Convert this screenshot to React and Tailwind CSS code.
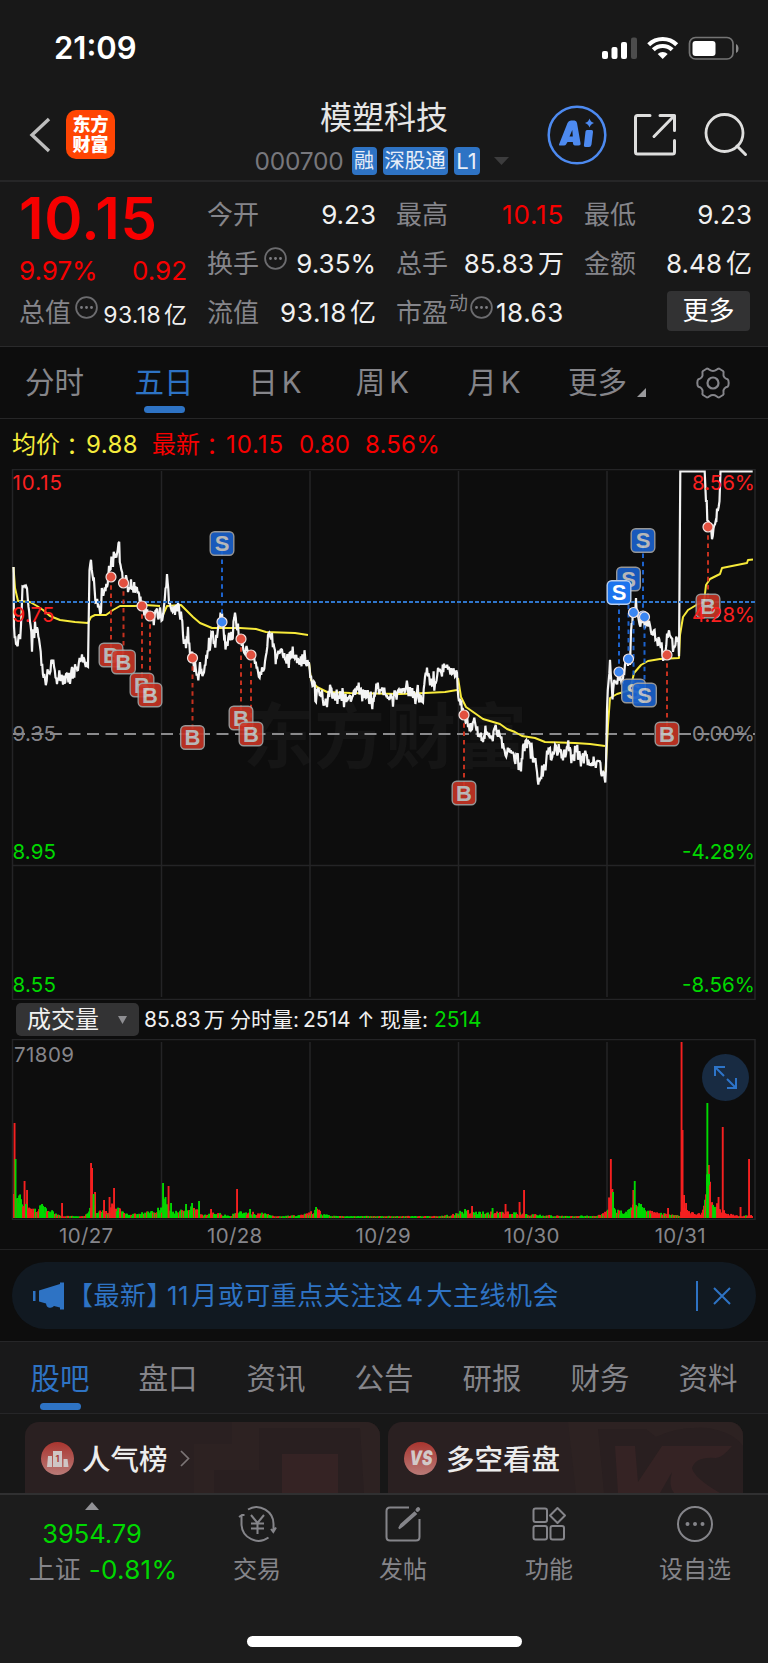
import { useMemo } from "react";

const RED = "#fa2020";
const GREEN = "#00d800";
const GRAY = "#85858a";

// price line, [x, y]
const pricePoints = [
  [13.5, 567], [14, 625], [16, 648], [18.5, 632], [21, 635], [22.5, 590], [25, 582], [27, 584], [28.5, 608], [32, 642], [35, 625], [37, 632], [39, 640], [41.5, 662],
  [45, 683], [47.5, 672], [49, 674], [52, 657], [54, 667], [57, 680], [60, 674], [63, 682], [66, 677], [70, 681], [72, 672], [75, 668], [78, 664], [82, 658], [85, 662],
  [88, 664], [89.5, 572], [91, 565], [93, 575], [95.5, 598], [98, 607], [101, 612], [102.5, 583], [104, 595], [107, 585], [109, 568], [113, 558], [115, 553], [117, 555],
  [118.5, 538], [120.5, 565], [123, 582], [126, 580], [128, 592], [131, 584], [133.5, 590], [137, 589], [139, 596], [142, 607], [145, 610], [148, 616], [153, 617],
  [157, 613], [160, 613], [161.5, 625], [164, 608], [167, 575], [169, 600], [172, 610], [175, 612], [178, 608], [181, 612], [183, 632], [186, 645], [188, 632], [190, 650],
  [193, 658], [195, 665], [197.5, 673], [200, 671], [204, 675], [207, 655], [209, 646], [212, 629], [214.5, 646], [217, 635], [219, 620], [222, 618], [225.5, 645],
  [229, 635], [232, 638], [235, 615], [238, 630], [241, 638], [245, 650], [251, 657], [255, 663], [258, 672], [262, 677], [265, 663], [268, 640], [270, 635], [272, 637],
  [275, 652], [277, 657], [282, 650], [285, 657], [288, 660], [292, 653], [297, 664], [303, 658], [309, 663], [311, 680], [314, 685], [316, 702], [317, 692], [322, 693],
  [325, 703], [327, 703], [330, 683], [333, 693], [336, 700], [341, 693], [344, 702], [348, 695], [350, 700], [353, 692], [358, 690], [363, 693], [367, 693], [370, 701],
  [373, 703], [375, 690], [377, 685], [380, 695], [385, 690], [390, 697], [393, 698], [398, 693], [403, 690], [410, 690], [413, 697], [417, 693], [420, 700], [423, 697],
  [425, 680], [427, 672], [430, 682], [435, 680], [438, 675], [442, 671], [444, 667], [448, 667], [452, 673], [455, 673], [457, 677], [459, 700], [462, 710], [464, 715],
  [468, 725], [472, 727], [475, 717], [478, 735], [483, 738], [487, 733], [492, 740], [495, 727], [500, 735], [503, 748], [507, 754], [510, 747], [513, 757], [517, 755],
  [521, 769], [523, 748], [527, 743], [530, 748], [533, 758], [537, 772], [539, 785], [542, 770], [545.5, 767], [547, 752], [553, 755], [558, 752], [563, 757], [569, 749],
  [572, 757], [578, 755], [583, 758], [590, 762], [595, 760], [599, 760], [602.5, 774], [606, 772], [607, 705], [608.5, 678], [610, 663], [612.5, 698], [615, 678],
  [616.5, 688], [619, 672], [622, 683], [625, 665], [628, 658], [630, 664], [631, 632], [633, 613], [636, 607], [638, 620], [642, 622], [644, 617], [647, 625], [649, 623],
  [651, 632], [653, 630], [657, 643], [660, 640], [664, 658], [667, 635], [669, 628], [673, 647], [677, 643], [679, 652], [680.3, 471.5], [704.7, 471.5], [706, 502],
  [708, 522], [712, 535], [715, 528], [717, 512], [719.5, 500], [720.5, 471.5], [752.7, 471.5],
];

const averageLines = [
  "M13.5 567 L15 588 L18 601 L30 602 L37 606 L43 610 L50 616 L60 620 L75 622 L88 623 L91 617 L95 615 L106 615 L113 610 L120 606 L135 606 L145 605 L160 606",
  "M162 617 L167 606 L181 605 L186 610 L193 617 L200 623 L212 628 L240 628 L256 629 L266 632 L295 633 L308 635",
  "M309 662 L311 680 L317 687 L327 692 L350 693 L400 694 L425 693 L445 692 L457 690",
  "M458 678 L461 697 L466 707 L476 714 L483 719 L500 724 L507 729 L515 732 L522 736 L535 738 L545 742 L575 743 L590 744 L605 746",
  "M605.5 772 L608 725 L610 698 L617 694 L630 690 L632 682 L634 673 L641 665 L648 661 L660 659 L679 658 L680 635 L683 617 L688 610 L698 604 L704 602 L706 585 L710 579 L720 574 L722 568 L737 565 L747 563 L748 560 L753 559.5",
];

// [type, x, dotY, badgeY]
const trades = [
  ["B", 111, 577, 655], ["B", 123.5, 583, 662], ["B", 142, 606, 685], ["B", 150, 616, 695],
  ["B", 192.5, 658, 737.5], ["S", 222, 622, 543.5], ["B", 241, 639, 718], ["B", 251, 655, 734],
  ["B", 464, 715, 793], ["S", 643, 616, 540.5], ["S", 628.5, 659, 579], ["S", 619, 672, 592.5],
  ["S", 633.5, 612.5, 691], ["S", 644.5, 617, 695], ["B", 667, 655, 734], ["B", 708, 527, 606],
];

// rough height of the volume bars along the axis
const volumeEnvelope = [
  [13, 22], [20, 22], [28, 14], [33, 10], [42, 12], [55, 6], [63, 2], [85, 2], [90, 18], [96, 12], [105, 6], [112, 14], [120, 9], [125, 5], [140, 5], [152, 8], [161, 10],
  [165, 18], [170, 12], [178, 5], [187, 13], [199, 7], [203, 3], [215, 6], [230, 2], [237, 7], [268, 5], [275, 1.5], [300, 3], [308, 5], [317, 9], [325, 4], [335, 2],
  [440, 2], [455, 4], [465, 9], [480, 6], [500, 6], [510, 7], [530, 4], [545, 3], [570, 2], [600, 3], [607, 8], [611, 30], [616, 12], [625, 5], [633, 13], [640, 14],
  [650, 7], [665, 5], [680, 2], [683, 24], [688, 8], [702, 5], [707, 50], [713, 18], [720, 13], [727, 5], [740, 2], [753, 4],
];

const volumePeaks = [
  [14.5, 95, "r"], [15.5, 59, "g"], [17.5, 20, "g"], [24.5, 37, "r"], [27, 28, "r"], [26, 14, "g"], [42, 14, "g"], [62, 15, "r"], [91, 55, "r"], [92, 50, "r"],
  [95, 26, "r"], [93.5, 24, "g"], [104, 18, "r"], [109.5, 21, "r"], [114, 30, "r"], [163, 35, "g"], [165.5, 21, "g"], [168.5, 32, "r"], [171, 15, "g"], [186, 14, "g"],
  [192, 15, "g"], [199, 17, "g"], [211, 9, "r"], [237, 29, "r"], [250, 9, "g"], [316, 11, "g"], [465, 9, "g"], [472, 12, "r"], [492.5, 10, "g"], [505.5, 14, "r"],
  [519.5, 16, "r"], [524, 28, "r"], [610.8, 59, "r"], [612.3, 29, "r"], [613, 26, "g"], [633.3, 28, "r"], [634.7, 37, "g"], [668, 10, "r"], [681.5, 176, "r"],
  [682.5, 88, "r"], [684, 23, "r"], [708.7, 53, "r"], [707.3, 115, "g"], [709, 44, "g"], [710, 33, "r"], [718.5, 21, "r"], [722.7, 91, "r"], [740.5, 11, "r"], [749, 59, "r"],
];

const gridX = [161.5, 310, 458.5, 607];
const dates = ["10/27", "10/28", "10/29", "10/30", "10/31"];

const noise = (n) => {
  const v = Math.sin(n * 127.1 + 3.7) * 43758.5453;
  return v - Math.floor(v);
};

function buildPricePath() {
  let d = `M${pricePoints[0][0]} ${pricePoints[0][1]}`;
  for (let i = 1; i < pricePoints.length; i++) {
    const [x0, y0] = pricePoints[i - 1];
    const [x1, y1] = pricePoints[i];
    const flat = y0 === 471.5 || y1 === 471.5;
    const steps = flat ? 1 : Math.max(1, Math.round((x1 - x0) * 1.3));
    for (let s = 1; s <= steps; s++) {
      const t = s / steps;
      const x = x0 + (x1 - x0) * t;
      const spike = noise(x * 3.1) > 0.8 ? 21 : 11;
      const jitter = flat ? 0 : (noise(x) - 0.5) * spike;
      d += ` L${x.toFixed(1)} ${(y0 + (y1 - y0) * t + jitter).toFixed(1)}`;
    }
  }
  return d;
}

function isGreen(x) {
  if (x > 680 && x < 705) return false;
  if (x >= 705 && x < 716) return noise(x * 2.3) > 0.25;
  if (x > 716) return noise(x * 2.3) > 0.93;
  return noise(x * 2.3) > 0.42;
}

function buildVolume() {
  const bars = [];
  let k = 0;
  for (let x = 14; x < 753; x++) {
    while (k < volumeEnvelope.length - 2 && volumeEnvelope[k + 1][0] < x) k++;
    const [x0, h0] = volumeEnvelope[k];
    const [x1, h1] = volumeEnvelope[k + 1];
    const h = h0 + ((h1 - h0) * (x - x0)) / (x1 - x0);
    bars.push([x, Math.max(1.5, h * (0.4 + noise(x * 0.77) * 0.7)), isGreen(x) ? "g" : "r"]);
  }
  return bars.concat(volumePeaks);
}

function Label({ x, y, w, end, fill, children }) {
  return (
    <text x={x} y={y} fontSize="20.5" fill={fill} textAnchor={end ? "end" : "start"} textLength={w} className="font-['Inter']">
      {children}
    </text>
  );
}

function PriceChart() {
  const path = useMemo(buildPricePath, []);
  return (
    <svg width="768" height="531" viewBox="0 469 768 531" className="block">
      <text x="243" y="762" fontSize="71" textLength="284" fontWeight="700" fill="#151515" className="font-['Noto_Sans_CJK_SC']">东方财富</text>
      <g stroke="#242426" strokeWidth="1.5" fill="none">
        <path d="M12.5 999.5V469.5H755V999.5Z" />
        <path d="M12.5 865.5H755" />
        {gridX.map((x) => <path key={x} d={`M${x} 471V997`} />)}
      </g>
      <path d="M13 734H755" stroke="#8a8a8c" strokeWidth="1.8" strokeDasharray="12 6.5" />
      {averageLines.map((d) => <path key={d} d={d} stroke="#f7ea3a" strokeWidth="2" fill="none" strokeLinejoin="round" />)}
      <path d={path} stroke="#f4f4f4" strokeWidth="2.2" fill="none" strokeLinejoin="miter" strokeMiterlimit="3" />
      <path d="M13 602H755" stroke="#2f76cc" strokeWidth="2" strokeDasharray="4 2" />
      {trades.map(([type, x, dotY, y]) => (
        <path key={`l${x}`} d={`M${x} ${dotY}V${y}`} stroke={type === "B" ? "#c4311f" : "#1c62cc"} strokeWidth="2" strokeDasharray="4.5 3.8" />
      ))}
      {trades.map(([type, x, dotY]) => (
        <circle key={`d${x}`} cx={x} cy={dotY} r="5" fill={type === "B" ? "#e2503f" : "#3b86f2"} stroke="#f2e4e2" strokeWidth="1.2" />
      ))}
      {trades.map(([type, x, , y]) => {
        const bright = x === 619;
        return (
          <g key={`b${x}`} opacity={bright ? 1 : 0.9}>
            <rect x={x - 11.8} y={y - 11.8} width="23.6" height="23.6" rx="4.5" fill={type === "B" ? "#c83425" : bright ? "#1b74ee" : "#1a62ce"} stroke={bright ? "#b9cdea" : "#a5a5a5"} strokeWidth="1.4" />
            <text x={x} y={y + 7.7} fontSize="22" fontWeight="700" textAnchor="middle" fill={bright ? "#fff" : "#cacaca"} className="font-['Liberation_Sans']">{type}</text>
          </g>
        );
      })}
      <Label x="12.5" y="490" w="49.5" fill={RED}>10.15</Label>
      <Label x="12.5" y="622" w="42" fill={RED}>9.75</Label>
      <Label x="12.5" y="740.5" w="43.5" fill={GRAY}>9.35</Label>
      <Label x="12.5" y="859" w="43.5" fill={GREEN}>8.95</Label>
      <Label x="12.5" y="991.5" w="43.5" fill={GREEN}>8.55</Label>
      <Label x="755" y="490" w="63" end fill={RED}>8.56%</Label>
      <Label x="755" y="622" w="63" end fill={RED}>4.28%</Label>
      <Label x="755" y="740.5" w="63" end fill={GRAY}>0.00%</Label>
      <Label x="755" y="859" w="73" end fill={GREEN}>-4.28%</Label>
      <Label x="755" y="991.5" w="73" end fill={GREEN}>-8.56%</Label>
    </svg>
  );
}

function VolumeChart() {
  const bars = useMemo(buildVolume, []);
  return (
    <svg width="768" height="181" viewBox="0 1039 768 181" className="block">
      <g stroke="#242426" strokeWidth="1.5" fill="none">
        <path d="M12.5 1219.5V1039.5H755V1219.5Z" />
        {gridX.map((x) => <path key={x} d={`M${x} 1042V1218`} />)}
      </g>
      {bars.map(([x, h, c], i) => (
        <rect key={i} x={x - 0.9} y={1218 - h} width="1.9" height={h} fill={c === "r" ? "#f52020" : GREEN} />
      ))}
      <Label x="14" y="1061.5" w="60" fill={GRAY}>71809</Label>
      <circle cx="725.5" cy="1077.5" r="23.5" fill="#182b42" />
      <path d="M715 1076V1067H725M715 1067L724 1076M727 1079L736 1088M736 1078V1088H727" stroke="#2d74c8" strokeWidth="2" fill="none" />
    </svg>
  );
}

function Dots({ className }) {
  return (
    <svg width="23" height="23" viewBox="0 0 23 23" className={className}>
      <circle cx="11.5" cy="11.5" r="10.4" fill="none" stroke="#6c6c6f" strokeWidth="1.8" />
      <path d="M6.5 11.5h.01M11.5 11.5h.01M16.5 11.5h.01" stroke="#7c7c80" strokeWidth="2.9" strokeLinecap="round" />
    </svg>
  );
}

function StatusBar() {
  return (
    <div className="flex h-[95px] items-center justify-between pl-[54px] pr-[29px]">
      <span className="mb-[1px] text-[31px] leading-none font-semibold text-white">21:09</span>
      <svg width="138" height="26" viewBox="601 34 138 26">
        <g fill="#fff">
          <rect x="602" y="50" width="6" height="8" rx="2" />
          <rect x="611.5" y="46" width="6" height="12" rx="2" />
          <rect x="621" y="41" width="6" height="17" rx="2" />
          <rect x="631" y="36.5" width="6" height="21.5" rx="2" fill="#4c4c4c" />
          <path d="M662.7 58L657.7 53A7.2 7.2 0 0 1 667.7 53Z" />
          <rect x="692.5" y="40" width="23" height="15" rx="3" />
        </g>
        <path d="M653.3 48.8A13.5 13.5 0 0 1 672.1 48.8M648.7 43.7A20 20 0 0 1 676.7 43.7" stroke="#fff" strokeWidth="4.2" fill="none" />
        <rect x="689.5" y="36.5" width="43.5" height="21.5" rx="6" fill="none" stroke="#747474" strokeWidth="1.7" />
        <path d="M736 43Q738.5 44 738.5 47.5T736 52Z" fill="#8a8a8a" />
      </svg>
    </div>
  );
}

function Header() {
  return (
    <header className="flex h-[87px] border-b-2 border-[#262627]">
      <div className="flex w-[234px] items-center pb-[2px] pl-[29px]">
        <svg width="22" height="36" viewBox="0 0 22 36" className="mb-[3px]">
          <path d="M20 2L3 18L20 34" stroke="#bdbdbd" strokeWidth="3.4" fill="none" />
        </svg>
        <div className="mb-1 ml-[15px] flex h-[49px] w-[49px] flex-col items-center justify-center rounded-[10px] bg-[#ff4503] text-[18px] leading-[20px] font-black text-white">
          <span>东方</span>
          <span>财富</span>
        </div>
      </div>
      <div className="flex w-[300px] flex-col items-center">
        <h1 className="mt-[6px] text-[32px] leading-[34px] text-[#e6e6e6]">模塑科技</h1>
        <div className="mt-[12px] flex h-[28px] items-center pr-[5px] text-[#e8eef8]">
          <span className="mr-[8px] w-[89px] text-[24.5px] leading-none tracking-[-0.2px] text-[#77777c]">000700</span>
          <span className="mr-[6px] flex h-[28px] w-[25px] items-center justify-center rounded-[4px] bg-[#2e73c4] text-[20px]">融</span>
          <span className="mr-[6px] flex h-[28px] w-[65px] items-center justify-center rounded-[4px] bg-[#2e73c4] text-[20.5px]">深股通</span>
          <span className="mr-[14px] flex h-[28px] w-[26px] items-center justify-center rounded-[4px] bg-[#2e73c4] text-[22px]">L1</span>
          <svg width="15" height="8" viewBox="0 0 15 8"><path d="M0 0H15L7.5 8Z" fill="#3c3c3d" /></svg>
        </div>
      </div>
      <div className="flex items-center pb-[5px] pl-[13px]">
        <svg width="60" height="60" viewBox="0 0 60 60">
          <circle cx="30" cy="30" r="28.3" fill="none" stroke="#4d8af0" strokeWidth="2.5" />
          <path fillRule="evenodd" d="M12 39.5L20.5 18Q21.5 15.5 24 15.5H27.5Q29.5 15.5 30 18L33.5 38Q34 40.5 31.5 40.5H28Q26 40.5 25.8 37H20.5L19 39.5Q18.5 40.5 17 40.5H13Q11.5 40.5 12 39.5ZM22.5 31.5H25.8L25.3 25Z" fill="#4d8af0" />
          <path d="M40 25H44.5Q46.3 25 46 27L44.5 39.5Q44 42 42 42H38.5Q36.5 42 37 39.5L38.5 26.5Q38.7 25 40 25ZM42.5 13.5Q43.5 17 47 18Q43.5 19 42.5 22.5Q41.5 19 38 18Q41.5 17 42.5 13.5Z" fill="#4d8af0" />
        </svg>
        <svg width="44" height="44" viewBox="0 0 44 44" className="ml-[26px]">
          <path d="M17 2.5H4.5Q2.5 2.5 2.5 4.5V39Q2.5 41 4.5 41H39.5Q41.5 41 41.5 39V27.5M27 2.5H41.5V17.5M41 3L21 23.5" stroke="#dededd" strokeWidth="3" fill="none" strokeLinecap="round" strokeLinejoin="round" />
        </svg>
        <svg width="44" height="44" viewBox="0 0 44 44" className="ml-[27px]">
          <circle cx="20.5" cy="20" r="18.5" fill="none" stroke="#dededd" strokeWidth="2.8" />
          <path d="M33 33L41.5 41.5" stroke="#dededd" strokeWidth="3" strokeLinecap="round" />
        </svg>
      </div>
    </header>
  );
}

function Cell({ label, value, dots, sup, valueClass = "text-[#f0f0f0]" }) {
  return (
    <div className="flex h-[49px] items-center justify-between text-[26px] leading-none whitespace-nowrap">
      <span className="flex items-center text-[#85858a]">
        {label}
        {sup && <span className="mb-[18px] ml-[1px] text-[19px]">{sup}</span>}
        {dots && <Dots className={sup ? "mb-[10px] ml-[2px]" : "mb-[10px] ml-[5px]"} />}
      </span>
      <span className={valueClass}>{value}</span>
    </div>
  );
}

function Quote() {
  return (
    <section className="grid h-[165px] grid-cols-[168px_169px_168px_168px] gap-x-5 border-b border-[#2a2a2b] pt-[8px] pl-[19px]">
      <div>
        <div className="flex h-[56px] items-center text-[58px] leading-none font-semibold tracking-[0.6px] text-[#f70000]">10.15</div>
        <div className="flex h-[49px] items-center justify-between text-[26px] leading-none text-[#f70000]">
          <span>9.97%</span>
          <span>0.92</span>
        </div>
        <div className="flex h-[35px] items-center justify-between leading-none whitespace-nowrap">
          <span className="flex items-center text-[26px] text-[#85858a]">总值<Dots className="mb-[10px] ml-[4px]" /></span>
          <span className="mt-[6px] text-[23px] text-[#f0f0f0]"><span className="tracking-[0.3px]">93.18</span><span className="ml-[3px]">亿</span></span>
        </div>
      </div>
      <div>
        <Cell label="今开" value="9.23" />
        <Cell label="换手" value="9.35%" dots />
        <Cell label="流值" value={<><span className="tracking-[0.7px]">93.18</span><span className="ml-[3px]">亿</span></>} />
      </div>
      <div>
        <Cell label="最高" value="10.15" valueClass="text-[#f70000] tracking-[0.8px]" />
        <Cell label="总手" value={<>85.83<span className="ml-1">万</span></>} />
        <Cell label="市盈" value="18.63" valueClass="text-[#f0f0f0] tracking-[0.6px]" sup="动" dots />
      </div>
      <div>
        <Cell label="最低" value="9.23" />
        <Cell label="金额" value={<>8.48<span className="ml-1">亿</span></>} />
        <div className="flex justify-end pt-[3px] pr-[2px]">
          <button className="h-[40px] w-[83px] rounded-[4px] bg-[#323233] text-[26px] leading-none text-white">更多</button>
        </div>
      </div>
    </section>
  );
}

function PeriodTabs() {
  return (
    <nav className="grid h-[72px] grid-cols-[109px_110px_112px_103px_120px_104px_110px] items-center border-b border-[#262627] text-center text-[29.5px] leading-none text-[#85858a]">
      <span>分时</span>
      <span className="relative text-[#2e73c4]">
        五日
        <i className="absolute -bottom-[16px] left-[35px] h-[7px] w-[41px] rounded-full bg-[#2e73c4]" />
      </span>
      <span>日<span className="ml-[4px]">K</span></span>
      <span>周<span className="ml-[4px]">K</span></span>
      <span>月<span className="ml-[4px]">K</span></span>
      <span className="flex items-end pl-[14px]">
        更多
        <svg width="9" height="9" viewBox="0 0 9 9" className="ml-[10px]"><path d="M9 0V9H0Z" fill="#9a9a9d" /></svg>
      </span>
      <svg width="34" height="32" viewBox="0 0 34 32" className="ml-[38px]">
        <path d="M11 1.5Q12.5 1.5 13.5 2.8Q15 4 17 4T20.5 2.8Q21.5 1.5 23 1.5L27 4Q28 5 27.5 6.5Q27 9 28.5 10.5Q29.5 11.8 31.5 12.2Q32.7 13 32.7 16T31.5 19.8Q29.5 20.2 28.5 21.5Q27 23 27.5 25.5Q28 27 27 28L23 30.5Q21.5 30.5 20.5 29.2Q19 28 17 28T13.5 29.2Q12.5 30.5 11 30.5L7 28Q6 27 6.5 25.5Q7 23 5.5 21.5Q4.5 20.2 2.5 19.8Q1.3 19 1.3 16T2.5 12.2Q4.5 11.8 5.5 10.5Q7 9 6.5 6.5Q6 5 7 4Z" fill="none" stroke="#85858a" strokeWidth="2" strokeLinejoin="round" />
        <circle cx="17" cy="16" r="5.5" fill="none" stroke="#85858a" strokeWidth="2.2" />
      </svg>
    </nav>
  );
}

function Legend() {
  return (
    <div className="flex h-[50px] items-center pt-[1px] pl-[12px] text-[24px] leading-none whitespace-nowrap text-[#f70000]">
      <span className="flex w-[140px] text-[#f5ec3c]">均价<span className="font-['Noto_Sans_CJK_TC']">：</span><span className="ml-[2px] tracking-[0.4px]">9.88</span></span>
      <span className="flex w-[147px]">最新<span className="font-['Noto_Sans_CJK_TC']">：</span><span className="ml-[2px] tracking-[0.9px]">10.15</span></span>
      <span className="w-[65px]">0.80</span>
      <span className="ml-[1px] tracking-[0.2px]">8.56%</span>
    </div>
  );
}

function VolumeBar() {
  return (
    <div className="flex h-[39px] items-center pl-[16px] text-[21px] leading-none whitespace-nowrap text-[#f0f0f0]">
      <button className="flex h-[33px] w-[123px] items-center justify-between rounded-[5px] bg-[#333334] pr-[12px] pl-[11px] text-[24px] leading-none">
        成交量
        <svg width="9" height="8" viewBox="0 0 9 8"><path d="M0 0H9L4.5 8Z" fill="#8e8e92" /></svg>
      </button>
      <span className="ml-[5px] w-[86px]">85.83<span className="ml-[3px]">万</span></span>
      <span className="w-[73px]">分时量:</span>
      <span className="w-[54px]">2514</span>
      <span className="w-[23px]">↑</span>
      <span className="w-[54px]">现量:</span>
      <span className="text-[#00d800]">2514</span>
    </div>
  );
}

function Notice() {
  return (
    <div className="h-[91px] px-[12px] pt-[12px]">
      <div className="flex h-[67px] items-center rounded-[34px] bg-[#111921] pl-[20px] text-[#2e73c4]">
        <svg width="33" height="28" viewBox="0 0 33 28">
          <path d="M1 9H3.5V19H1ZM7 8.5L28 2V0.5H32V27.5H28V25.5L22 24Q20 26.5 16.5 25.5Q14.5 25 14 21.5L7 19.5Z" fill="#2e73c4" />
        </svg>
        <span className="ml-[2px] w-[629px] pt-[1px] text-[26px] leading-none tracking-[0.5px] whitespace-nowrap">【最新】<span className="-ml-[6px] mr-[2px]">11</span>月或可重点关注这<span className="mx-[3px]">4</span>大主线机会</span>
        <i className="h-[30px] w-[2px] bg-[#2e73c4]" />
        <svg width="18" height="18" viewBox="0 0 18 18" className="ml-[15px]">
          <path d="M1 1L17 17M17 1L1 17" stroke="#2e73c4" strokeWidth="2" />
        </svg>
      </div>
    </div>
  );
}

function InfoTabs() {
  const tabs = ["股吧", "盘口", "资讯", "公告", "研报", "财务", "资料"];
  return (
    <nav className="flex h-[73px] border-t border-b border-[#262628] bg-[#19191a] px-[6px] text-[29.5px] leading-none text-[#85858a]">
      {tabs.map((tab, i) => (
        <span key={tab} className={`flex w-[108px] flex-col items-center pt-[22px] ${i === 0 ? "text-[#2e73c4]" : ""}`}>
          {tab}
          {i === 0 && <i className="mt-[9px] h-[7px] w-[41px] rounded-full bg-[#2e73c4]" />}
        </span>
      ))}
    </nav>
  );
}

function Cards() {
  return (
    <div className="flex h-[79px] gap-[8px] overflow-hidden bg-[#171717] pt-[8px] pl-[25px] text-[28.5px] leading-none font-medium text-[#ececec]">
      <div className="relative flex h-[90px] w-[355px] items-center overflow-hidden rounded-[14px] bg-[#2a2021] pb-[17px] pl-[16px]">
        <svg width="186" height="71" viewBox="0 0 186 71" className="absolute top-0 right-0">
          <path d="M0 22H38V0H186V71H0Z" fill="#2d2222" />
          <path d="M20 48H65V6H166L170 71H20Z" fill="#291f20" />
          <path d="M88 32H144V71H88Z" fill="#352324" />
        </svg>
        <svg width="33" height="33" viewBox="0 0 33 33">
          <defs>
            <linearGradient id="badge" x1="0" y1="0" x2="0" y2="1">
              <stop offset="0" stopColor="#a9352f" />
              <stop offset="1" stopColor="#b97a77" />
            </linearGradient>
          </defs>
          <circle cx="16.5" cy="16.5" r="16.5" fill="url(#badge)" />
          <path d="M7 14H11V25H6ZM12 9H21V25H12ZM22.5 17H26.5L27.5 25H22.5Z" fill="#cfc6c5" />
          <text x="16.5" y="20" fontSize="9" fontWeight="700" textAnchor="middle" fill="#a9403a">1</text>
        </svg>
        <span className="mt-[3px] ml-[8px]">人气榜</span>
        <svg width="10" height="17" viewBox="0 0 10 17" className="ml-[12px]"><path d="M1 1L8.5 8.5L1 16" stroke="#7c7576" strokeWidth="1.7" fill="none" /></svg>
      </div>
      <div className="relative flex h-[90px] w-[355px] items-center overflow-hidden rounded-[14px] bg-[#2a2021] pb-[17px] pl-[16px]">
        <svg width="175" height="71" viewBox="0 0 175 71" className="absolute top-0 right-0">
          <path d="M0 0H175V71H8Z" fill="#2d2222" />
          <path d="M30 7H78L88 15Q110 4 140 6Q165 10 175 24V71H36Z" fill="#291f20" />
          <path d="M47 24H67L70 60L94 24H164Q154 36 148 36Q128 34 124 46Q126 56 152 71H106Q100 64 104 50L92 71H50Z" fill="#352324" />
        </svg>
        <svg width="33" height="33" viewBox="0 0 33 33">
          <circle cx="16.5" cy="16.5" r="16.5" fill="url(#badge)" />
          <text x="-1" y="23" fontSize="20" fontWeight="900" textAnchor="middle" transform="skewX(-8) scale(.78 1)" dx="26" fill="#d2c9c8" className="font-['Inter']">VS</text>
        </svg>
        <span className="mt-[3px] ml-[9px]">多空看盘</span>
      </div>
    </div>
  );
}

const navItems = [
  {
    label: "交易",
    icon: (
      <>
        <path d="M11 4.5A17 17 0 0 1 36.5 20V26M39 22.5L36.3 27L34 24M31.5 32.5A17 17 0 0 1 4.5 20V10M2 12L5 10H7.5" />
        <path d="M14 10L20.5 18L27 10M20.5 18V29M14 18.5H27M14 23.5H27" />
      </>
    ),
  },
  {
    label: "发帖",
    icon: (
      <>
        <path d="M26 2.5H7Q3.5 2.5 3.5 6V32Q3.5 35.5 7 35.5H33Q36.5 35.5 36.5 32V14" />
        <path d="M16 23.5L18 19.5L31.5 7.5L33 9L20 20.5Z" strokeWidth="1.8" fill="#85858a" />
        <path d="M34.5 4.8L35.2 4.1" strokeWidth="4" strokeLinecap="round" />
      </>
    ),
  },
  {
    label: "功能",
    icon: (
      <>
        <rect x="4.5" y="3.5" width="13.5" height="13.5" rx="2" />
        <rect x="4.5" y="21" width="13.5" height="13.5" rx="2" />
        <rect x="21.5" y="21" width="13.5" height="13.5" rx="2" />
        <path d="M28.5 3L36 10.5L28.5 18L21 10.5Z" strokeLinejoin="round" />
      </>
    ),
  },
  {
    label: "设自选",
    icon: (
      <>
        <circle cx="20" cy="19" r="17" />
        <path d="M12.5 19h.01M20 19h.01M27.5 19h.01" strokeWidth="4" strokeLinecap="round" />
      </>
    ),
  },
];

function BottomBar() {
  return (
    <footer className="flex h-[170px] flex-col items-center border-t-2 border-[#303031] bg-[#1c1c1c]">
      <div className="flex h-[141px] w-full text-[#85858a]">
        <div className="flex w-[184px] flex-col items-center leading-none">
          <svg width="14" height="8" viewBox="0 0 14 8" className="mt-[7px]"><path d="M0 8H14L7 0Z" fill="#929296" /></svg>
          <span className="mt-[11px] text-[25.5px] text-[#00d800]">3954.79</span>
          <span className="mt-[10px] ml-[22px] text-[26px] whitespace-nowrap">上证<span className="ml-[8px] tracking-[0.3px] text-[#00d800]">-0.81%</span></span>
        </div>
        {navItems.map((item) => (
          <div key={item.label} className="flex w-[146px] flex-col items-center pt-[10px] text-[24px] leading-none">
            <svg width="40" height="38" viewBox="0 0 40 38" fill="none" stroke="#85858a" strokeWidth="2">{item.icon}</svg>
            <span className="mt-[15px]">{item.label}</span>
          </div>
        ))}
      </div>
      <div className="h-[11px] w-[275px] rounded-full bg-white" />
    </footer>
  );
}

export default function App() {
  return (
    <div className="w-[768px] overflow-hidden bg-[#0d0d0d] font-['Inter','Noto_Sans_CJK_SC',sans-serif]">
      <div className="bg-[#181818]">
        <StatusBar />
        <Header />
        <Quote />
      </div>
      <PeriodTabs />
      <Legend />
      <PriceChart />
      <VolumeBar />
      <VolumeChart />
      <div className="flex h-[30px] items-center border-b border-[#222223] pt-[3px] pl-[12px] text-[20.5px] leading-none text-[#85858a]">
        {dates.map((date) => (
          <span key={date} className="w-[148.5px] text-center tracking-[0.3px]">{date}</span>
        ))}
      </div>
      <Notice />
      <InfoTabs />
      <Cards />
      <BottomBar />
    </div>
  );
}
